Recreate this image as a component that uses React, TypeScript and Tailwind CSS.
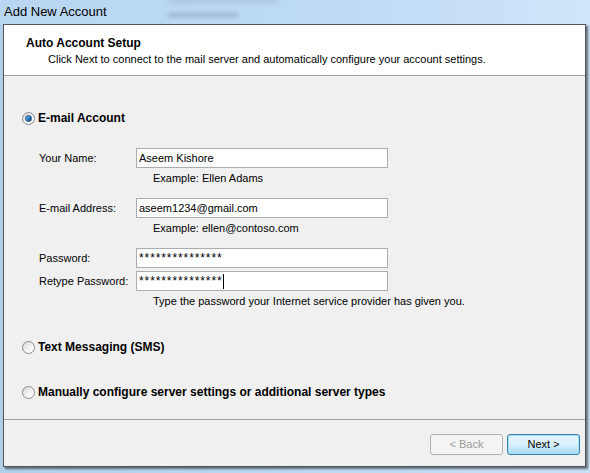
import React from "react";

function Radio({ checked }: { checked?: boolean }) {
  return (
    <span className="flex h-[13px] w-[13px] items-center justify-center rounded-full border border-[#8a8a8a] bg-gradient-to-br from-[#d4d4d4] via-[#f2f2f2] to-white">
      {checked && (
        <span className="h-[7px] w-[7px] rounded-full border border-[#1c4f7e] bg-gradient-to-br from-[#7cc6f5] via-[#2a7fc8] to-[#0d3d6e]" />
      )}
    </span>
  );
}

function Field({ label, value, caret, secret, mt }: { label: string; value: string; caret?: boolean; secret?: boolean; mt: string }) {
  return (
    <div className={`flex h-[20px] items-center ${mt}`}>
      <span className="w-[97px] shrink-0">{label}</span>
      <div className="flex h-[20px] w-[252px] items-center border border-[#abadb3] bg-white pl-[2px]">
        <span className={secret ? "text-[12px] tracking-[0.9px]" : ""}>{value}</span>
        {caret && <span className="h-[15px] w-px bg-black" />}
      </div>
    </div>
  );
}

function Hint({ text }: { text: string }) {
  return <div className="flex h-[20px] items-center pl-[114px]">{text}</div>;
}

export default function App() {
  return (
    <div
      className="relative flex h-[473px] w-[590px] flex-col overflow-hidden bg-gradient-to-r from-[#b2cfea] to-[#c9e1f6] text-[11px] text-black"
      style={{ fontFamily: '"Liberation Sans", Arial, sans-serif' }}
    >
      {/* title bar */}
      <div className="relative flex h-[24px] shrink-0 items-center bg-gradient-to-r from-[#b8d6f2] via-[#bcd9f5] to-[#cfe5f9] pl-[4px]">
        <span className="text-[13px]">Add New Account</span>
        {/* blurred windows behind the glass */}
        <div className="absolute left-[168px] top-[0px] h-[3px] w-[110px] bg-[#8fa3b8] opacity-50 blur-[2px]" />
        <div className="absolute left-[168px] top-[13px] h-[4px] w-[70px] bg-[#7d8fa3] opacity-50 blur-[2px]" />
      </div>

      {/* window body */}
      <div className="ml-[3px] flex h-[443px] w-[583px] flex-col border border-[#4d5660] bg-[#f0f0f0] shadow-[2px_2px_2px_rgba(0,0,0,0.5)]">
        <div className="h-[51px] shrink-0 border-b border-[#a0a0a0] bg-white pl-[22px] pt-[10px]">
          <div className="h-[17px] text-[12px] font-bold leading-[17px]">Auto Account Setup</div>
          <div className="h-[15px] pl-[22px] leading-[15px]">
            Click Next to connect to the mail server and automatically configure your account settings.
          </div>
        </div>

        <div className="h-[344px] shrink-0 border-b border-[#a0a0a0] pl-[18px] pt-[34px]">
          <div className="flex h-[16px] items-center gap-[3px]">
            <Radio checked />
            <span className="text-[12px] font-bold">E-mail Account</span>
          </div>

          <div className="mt-[22px] pl-[17px]">
            <Field label="Your Name:" value="Aseem Kishore" mt="" />
            <Hint text="Example: Ellen Adams" />
            <Field label="E-mail Address:" value="aseem1234@gmail.com" mt="mt-[10px]" />
            <Hint text="Example: ellen@contoso.com" />
            <Field label="Password:" value="***************" secret mt="mt-[10px]" />
            <Field label="Retype Password:" value="***************" secret caret mt="mt-[3px]" />
            <Hint text="Type the password your Internet service provider has given you." />
          </div>

          <div className="mt-[28px] flex h-[16px] items-center gap-[3px]">
            <Radio />
            <span className="text-[12px] font-bold">Text Messaging (SMS)</span>
          </div>
          <div className="mt-[29px] flex h-[16px] items-center gap-[3px]">
            <Radio />
            <span className="text-[12px] font-bold">Manually configure server settings or additional server types</span>
          </div>
        </div>

        <div className="flex flex-1 items-start justify-end gap-[4px] pr-[5px] pt-[14px]">
          <button className="flex h-[21px] w-[73px] items-center justify-center rounded-[3px] border border-[#adb2b5] bg-[#f4f4f4] text-[#9a9a9a]">
            &lt; Back
          </button>
          <button className="flex h-[21px] w-[73px] items-center justify-center rounded-[3px] border border-[#3c7fb1] bg-gradient-to-b from-[#eaf6fd] via-[#d9f0fc] to-[#a7d9f5] shadow-[inset_0_0_0_1px_#9fe3fb]">
            Next &gt;
          </button>
        </div>
      </div>
    </div>
  );
}
